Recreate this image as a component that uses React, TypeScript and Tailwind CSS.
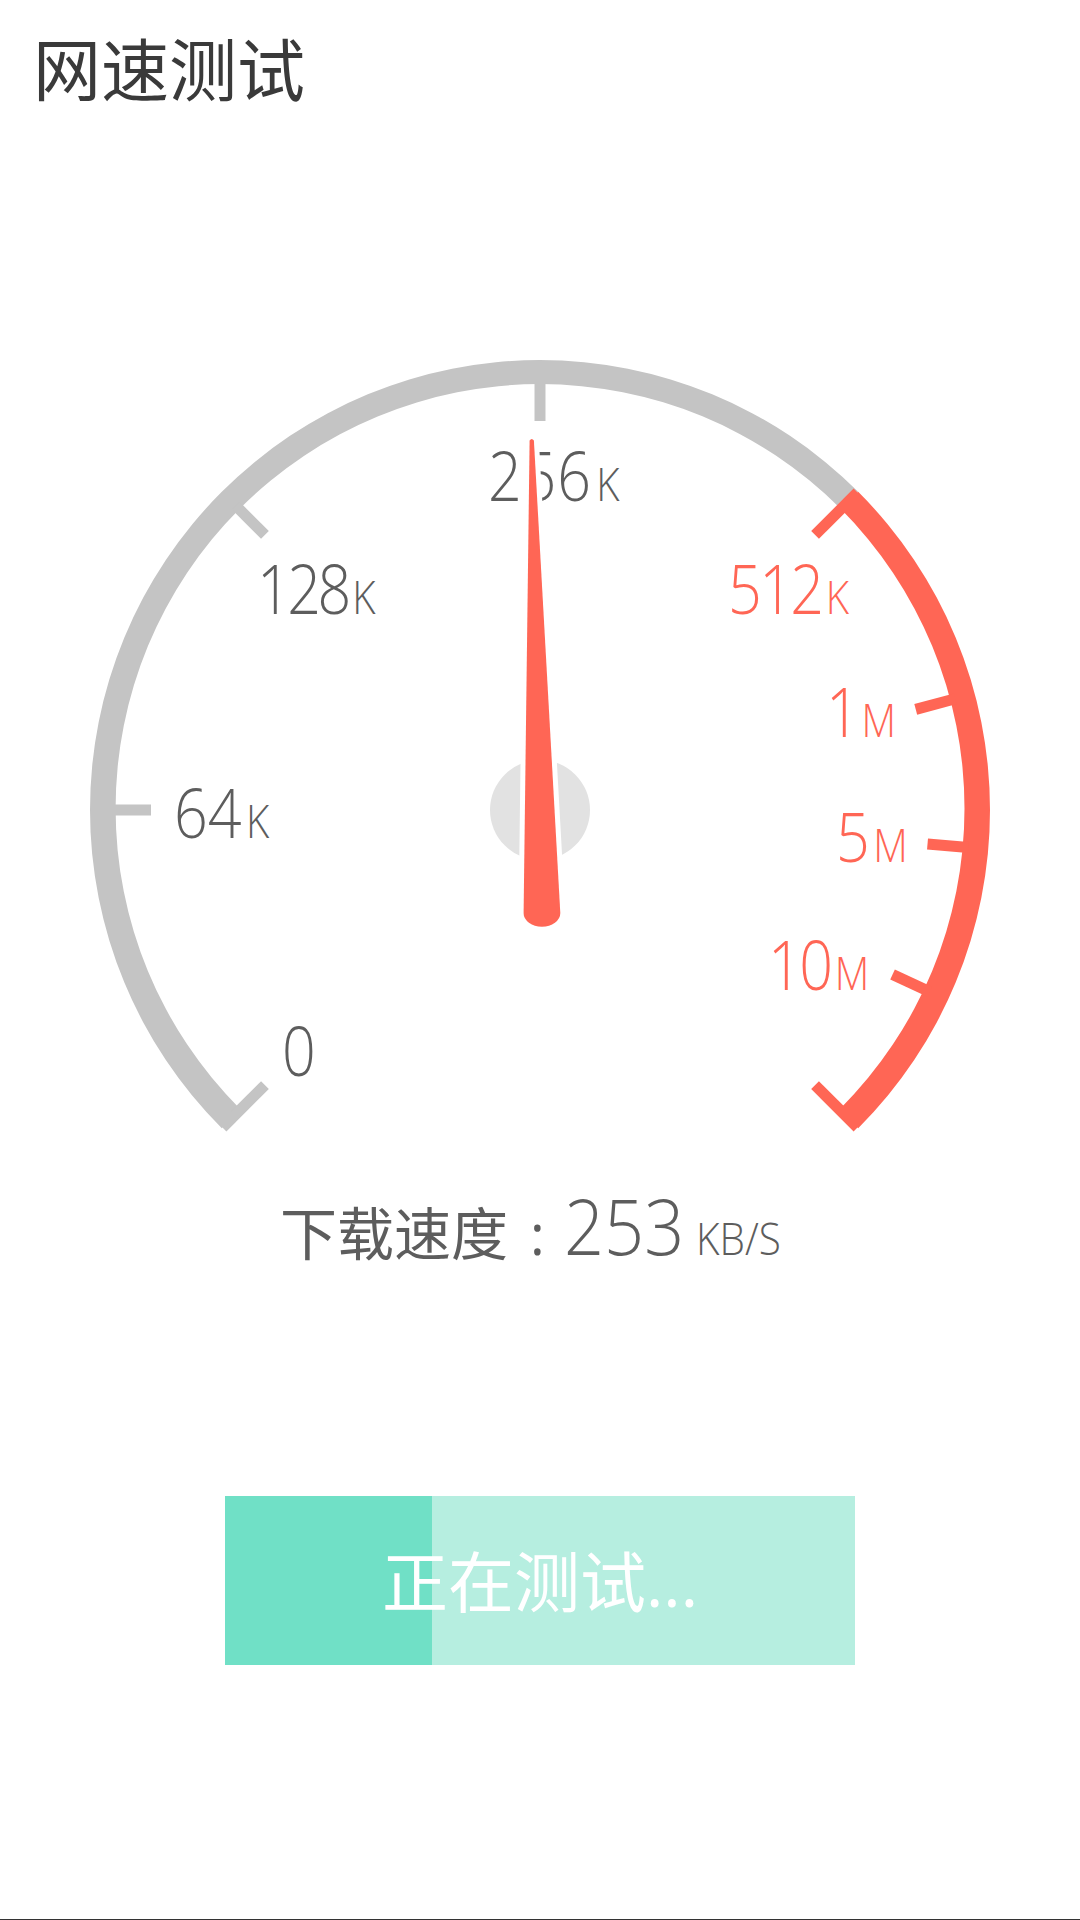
const CX = 450;
const CY = 450;

function polar(r: number, deg: number, cy = CY) {
  const a = (deg * Math.PI) / 180;
  return [CX + r * Math.sin(a), cy - r * Math.cos(a)];
}

// the band is a little thicker towards the bottom, so the inner edge sits 1.5px higher
function band(from: number, to: number) {
  const [x1, y1] = polar(450, from);
  const [x2, y2] = polar(450, to);
  const [x3, y3] = polar(424.5, to, CY - 1.5);
  const [x4, y4] = polar(424.5, from, CY - 1.5);
  const large = to - from > 180 ? 1 : 0;
  return `M${x1} ${y1}A450 450 0 ${large} 1 ${x2} ${y2}L${x3} ${y3}A424.5 424.5 0 ${large} 0 ${x4} ${y4}Z`;
}

function Tick({ deg, color, from = 430 }: { deg: number; color: string; from?: number }) {
  const [x1, y1] = polar(from, deg);
  const [x2, y2] = polar(389, deg);
  return <line x1={x1} y1={y1} x2={x2} y2={y2} stroke={color} strokeWidth={11} />;
}

function Mark({ className, value, unit }: { className: string; value: string; unit: string }) {
  return (
    <span className={`absolute flex origin-left scale-x-[0.87] items-baseline text-[68px] leading-none font-light ${className}`}>
      {value}
      <span className="ml-[5px] text-[46px] tracking-normal">{unit}</span>
    </span>
  );
}

const GRAY = "#c4c4c4";
const RED = "#ff6655";

function Gauge() {
  return (
    <div className="relative mx-auto h-[775px] w-[900px]">
      <Mark className="left-[192px] top-[656px] text-[#5d5d5d]" value="0" unit="" />
      <Mark className="left-[84px] top-[418px] tracking-[0px] text-[#5d5d5d]" value="64" unit="K" />
      <Mark className="left-[167px] top-[194px] tracking-[-4px] text-[#5d5d5d]" value="128" unit="K" />
      <Mark className="left-[398px] top-[81px] tracking-[1px] text-[#5d5d5d]" value="256" unit="K" />
      <Mark className="left-[638px] top-[194px] tracking-[-3px] text-[#ff6655]" value="512" unit="K" />
      <Mark className="left-[736px] top-[317px] tracking-[-3px] text-[#ff6655]" value="1" unit="M" />
      <Mark className="left-[746px] top-[442px] tracking-[-1px] text-[#ff6655]" value="5" unit="M" />
      <Mark className="left-[678px] top-[570px] tracking-[-3px] text-[#ff6655]" value="10" unit="M" />
      <svg className="absolute inset-0 overflow-visible" width="900" height="775" viewBox="0 0 900 775">
        <path d={band(-135, 45)} fill={GRAY} />
        <path d={band(45, 135)} fill={RED} />
        <Tick deg={-135} color={GRAY} from={449} />
        <Tick deg={-90} color={GRAY} />
        <Tick deg={-45} color={GRAY} />
        <Tick deg={0} color={GRAY} />
        <Tick deg={45} color={RED} from={449} />
        <Tick deg={75} color={RED} />
        <Tick deg={95} color={RED} />
        <Tick deg={115} color={RED} />
        <Tick deg={135} color={RED} from={449} />
        <circle cx="450" cy="450" r="50" fill="#e2e2e2" />
        <path
          d="M439.6 80.5Q441.7 77.5 443.9 80.5L470.3 553A18.35 13.7 0 0 1 433.6 553Z"
          fill={RED}
          stroke="#ffffff"
          strokeWidth={10}
          paintOrder="stroke"
        />
      </svg>
    </div>
  );
}

export default function App() {
  return (
    <main className="flex h-[1920px] w-[1080px] flex-col overflow-hidden bg-white font-['Open_Sans','Noto_Sans_CJK_SC',sans-serif]">
      <h1 className="h-[360px] pl-[33px] pt-[20px] text-[68px] leading-[100px] font-normal text-[#3a3a3a]">网速测试</h1>
      <Gauge />
      <div className="mt-[35px] flex h-[110px] items-baseline pl-[280px] text-[#5d5d5d]">
        <span className="text-[57px] leading-[110px]">下载速度</span>
        <span className="ml-[22px] text-[56px] leading-[110px]">:</span>
        <span className="ml-[19px] origin-left scale-x-[0.9] text-[78px] font-light leading-[110px]">253</span>
        <span className="-ml-[1px] origin-left scale-x-[0.92] text-[44px] font-light leading-[110px]">KB/S</span>
      </div>
      <div className="relative mx-auto mt-[216px] flex h-[169px] w-[630px] items-center justify-center bg-[#b6eee0] text-white">
        <div className="absolute inset-y-0 left-0 w-[207px] bg-[#70e0c6]" />
        <span className="relative text-[66px] leading-none">正在测试...</span>
      </div>
      <div className="mt-auto h-[1px] bg-[#333333]" />
    </main>
  );
}
